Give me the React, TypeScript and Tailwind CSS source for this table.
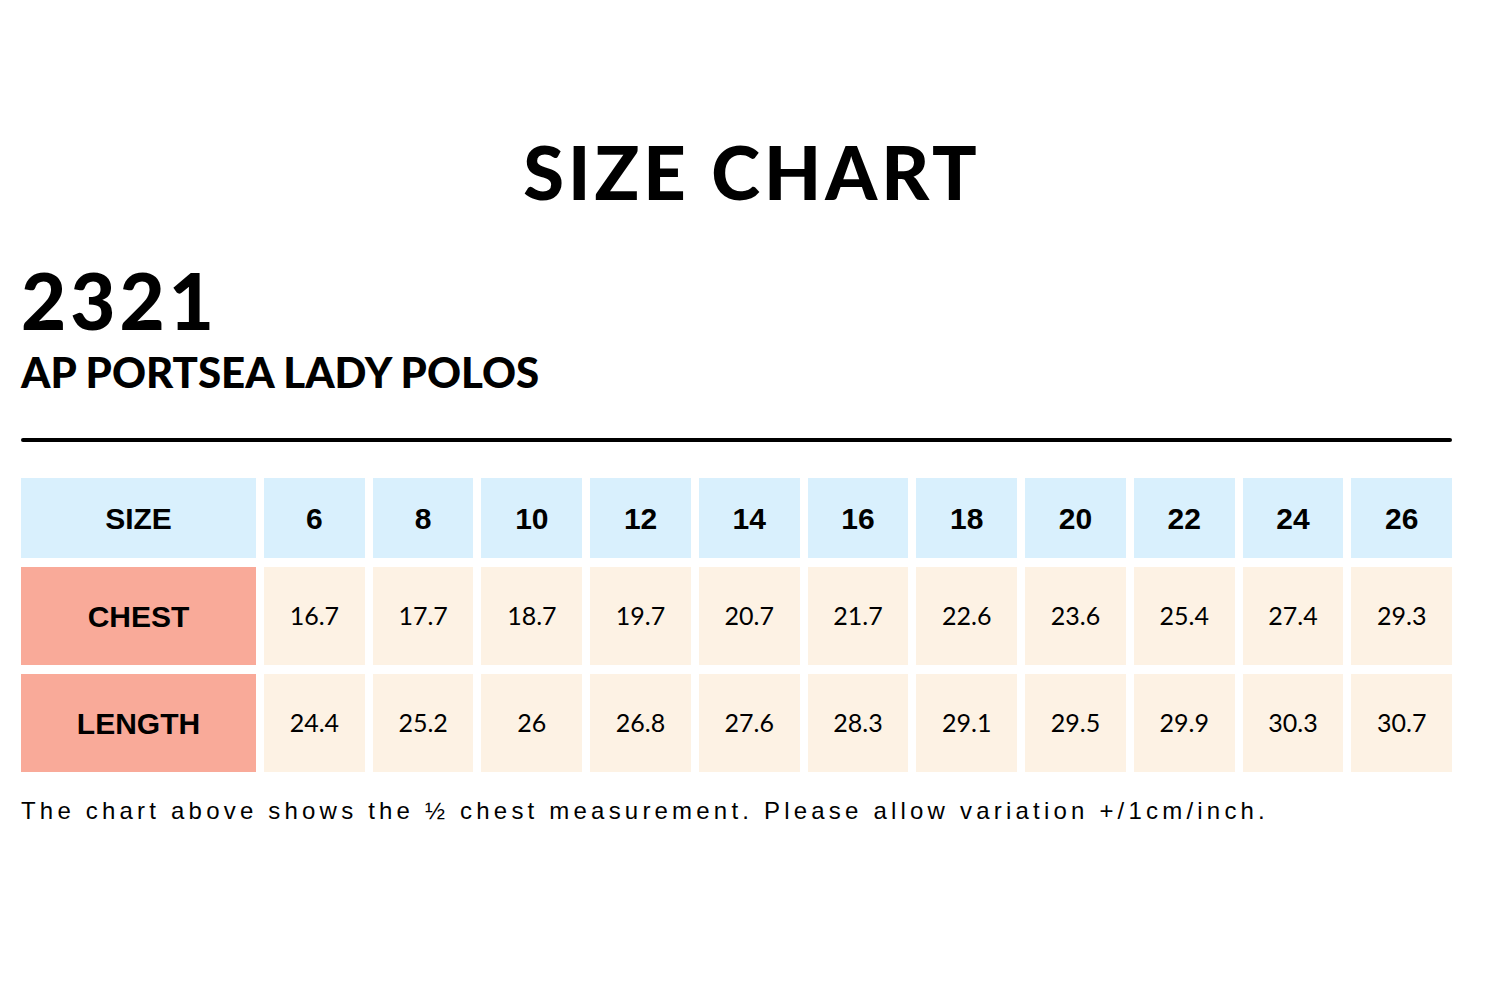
import React from "react";

const sizes = ["6", "8", "10", "12", "14", "16", "18", "20", "22", "24", "26"];
const chest = ["16.7", "17.7", "18.7", "19.7", "20.7", "21.7", "22.6", "23.6", "25.4", "27.4", "29.3"];
const length = ["24.4", "25.2", "26", "26.8", "27.6", "28.3", "29.1", "29.5", "29.9", "30.3", "30.7"];

export default function App() {
  return (
    <div className="w-[1500px] h-[1000px] bg-white text-black relative overflow-hidden">
      <div className="pt-[130px] flex justify-center">
        <h1 className="font-['Lato',sans-serif] font-black text-[74px] leading-[84px] tracking-[4px] pl-[4px]">SIZE CHART</h1>
      </div>
      <div className="px-[21px] pr-[48px]">
        <div className="mt-[46px] font-['Lato',sans-serif] font-black text-[78px] leading-[80px] tracking-[4px]">2321</div>
        <div className="mt-[4px] font-['Lato',sans-serif] font-black text-[42px] leading-[56px]">AP PORTSEA LADY POLOS</div>
        <div className="mt-[38px] h-[4px] rounded-full bg-black" />
        <div className="mt-[36px] flex flex-col gap-[9px]">
          <div className="flex gap-[8px] h-[80px]">
            <div className="w-[235px] shrink-0 bg-[#d9f0fd] flex items-center justify-center font-['Liberation_Sans',Arial,sans-serif] font-bold text-[30px]">SIZE</div>
            {sizes.map((s) => (
              <div key={s} className="flex-1 bg-[#d9f0fd] flex items-center justify-center font-['Liberation_Sans',Arial,sans-serif] font-bold text-[30px]">{s}</div>
            ))}
          </div>
          <div className="flex gap-[8px] h-[98px]">
            <div className="w-[235px] shrink-0 bg-[#f9aa99] flex items-center justify-center font-['Liberation_Sans',Arial,sans-serif] font-bold text-[30px]">CHEST</div>
            {chest.map((s, i) => (
              <div key={i} className="flex-1 bg-[#fdf2e4] flex items-center justify-center font-['Lato',sans-serif] text-[25px]">{s}</div>
            ))}
          </div>
          <div className="flex gap-[8px] h-[98px]">
            <div className="w-[235px] shrink-0 bg-[#f9aa99] flex items-center justify-center font-['Liberation_Sans',Arial,sans-serif] font-bold text-[30px]">LENGTH</div>
            {length.map((s, i) => (
              <div key={i} className="flex-1 bg-[#fdf2e4] flex items-center justify-center font-['Lato',sans-serif] text-[25px]">{s}</div>
            ))}
          </div>
        </div>
        <p className="mt-[24px] font-['Liberation_Sans',Arial,sans-serif] text-[24px] leading-[30px] tracking-[4.2px]">
          The chart above shows the ½ chest measurement. Please allow variation +/1cm/inch.
        </p>
      </div>
    </div>
  );
}
